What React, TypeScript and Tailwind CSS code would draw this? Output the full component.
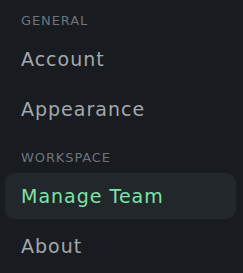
const sections = [
  { label: 'GENERAL', items: ['Account', 'Appearance'] },
  { label: 'WORKSPACE', items: ['Manage Team', 'About'] },
];

const ACTIVE = 'Manage Team';

export default function App() {
  return (
    <div
      className="w-[243px] h-[273px] overflow-hidden bg-[#181b1f] pt-[13px] pl-[5px] pr-[7px]"
      style={{ fontFamily: '"DejaVu Sans", sans-serif' }}
    >
      {sections.map((s, i) => (
        <div key={s.label} className={i > 0 ? 'mt-[18px]' : ''}>
          <p className="h-[16px] pl-[16px] text-[13px] leading-[16px] tracking-[0.9px] text-[#6b757f]">
            {s.label}
          </p>
          <ul className="mt-[7px] flex flex-col gap-[4px]">
            {s.items.map((item) => {
              const active = item === ACTIVE;
              return (
                <li
                  key={item}
                  className={`flex h-[46px] items-center rounded-[10px] pl-[16px] text-[19px] tracking-[1px] ${
                    active ? 'bg-[#22272b] text-[#7ee2a8]' : 'text-[#a3a8ad]'
                  }`}
                >
                  {item}
                </li>
              );
            })}
          </ul>
        </div>
      ))}
    </div>
  );
}
